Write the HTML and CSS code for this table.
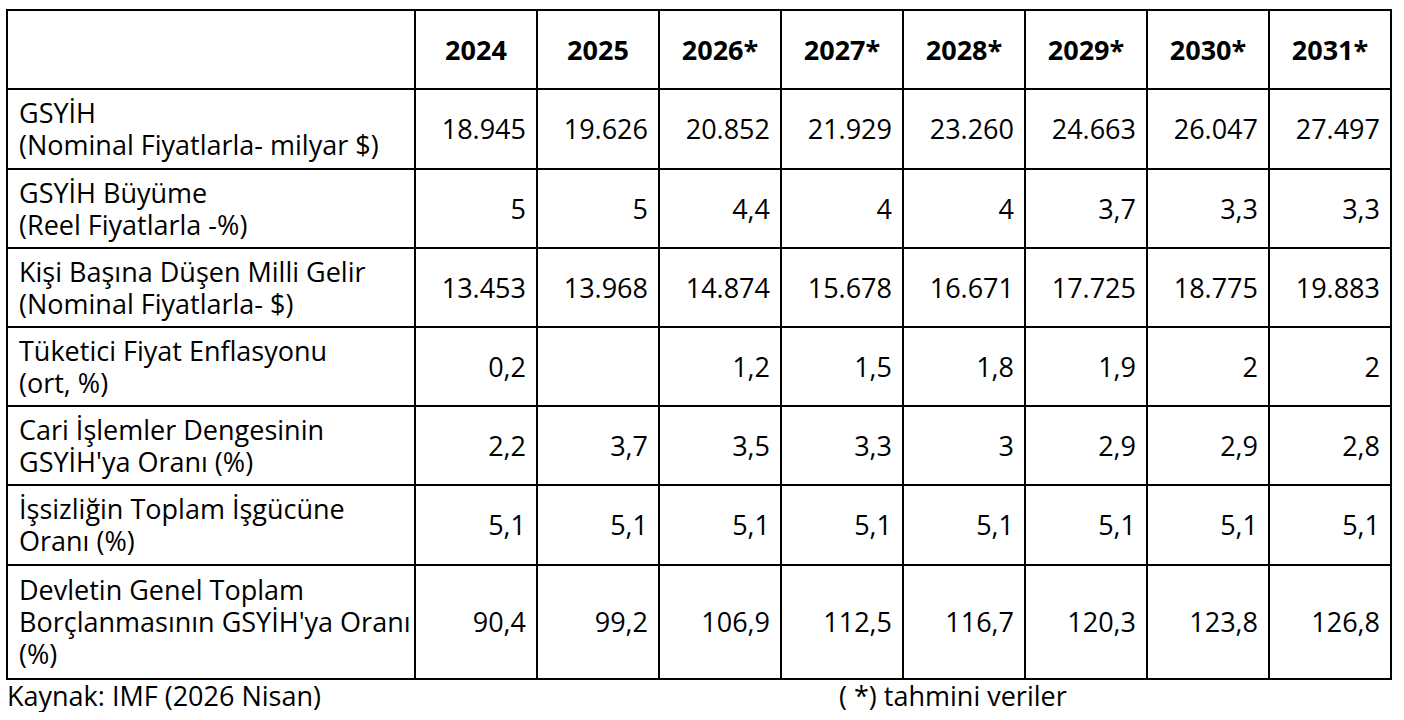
FILE: index.html
```html
<!DOCTYPE html>
<html lang="tr">
<head>
<meta charset="utf-8">
<title>Makroekonomik Göstergeler</title>
<link rel="stylesheet" href="styles.css">
</head>
<body>
<table class="data">
  <colgroup>
    <col class="c-label">
    <col class="c-num"><col class="c-num"><col class="c-num"><col class="c-num">
    <col class="c-num"><col class="c-num"><col class="c-num"><col class="c-num">
  </colgroup>
  <thead>
    <tr class="r79">
      <th class="lbl"></th>
      <th>2024</th><th>2025</th><th>2026*</th><th>2027*</th><th>2028*</th><th>2029*</th><th>2030*</th><th>2031*</th>
    </tr>
  </thead>
  <tbody>
    <tr class="r80">
      <td class="lbl">GSYİH<br>(Nominal Fiyatlarla- milyar $)</td>
      <td>18.945</td><td>19.626</td><td>20.852</td><td>21.929</td><td>23.260</td><td>24.663</td><td>26.047</td><td>27.497</td>
    </tr>
    <tr class="r79">
      <td class="lbl">GSYİH Büyüme<br>(Reel Fiyatlarla -%)</td>
      <td>5</td><td>5</td><td>4,4</td><td>4</td><td>4</td><td>3,7</td><td>3,3</td><td>3,3</td>
    </tr>
    <tr class="r79">
      <td class="lbl">Kişi Başına Düşen Milli Gelir<br>(Nominal Fiyatlarla- $)</td>
      <td>13.453</td><td>13.968</td><td>14.874</td><td>15.678</td><td>16.671</td><td>17.725</td><td>18.775</td><td>19.883</td>
    </tr>
    <tr class="r79">
      <td class="lbl">Tüketici Fiyat Enflasyonu<br>(ort, %)</td>
      <td>0,2</td><td></td><td>1,2</td><td>1,5</td><td>1,8</td><td>1,9</td><td>2</td><td>2</td>
    </tr>
    <tr class="r79">
      <td class="lbl">Cari İşlemler Dengesinin<br>GSYİH'ya Oranı (%)</td>
      <td>2,2</td><td>3,7</td><td>3,5</td><td>3,3</td><td>3</td><td>2,9</td><td>2,9</td><td>2,8</td>
    </tr>
    <tr class="r80">
      <td class="lbl">İşsizliğin Toplam İşgücüne<br>Oranı (%)</td>
      <td>5,1</td><td>5,1</td><td>5,1</td><td>5,1</td><td>5,1</td><td>5,1</td><td>5,1</td><td>5,1</td>
    </tr>
    <tr class="r114">
      <td class="lbl">Devletin Genel Toplam<br>Borçlanmasının GSYİH'ya Oranı<br>(%)</td>
      <td>90,4</td><td>99,2</td><td>106,9</td><td>112,5</td><td>116,7</td><td>120,3</td><td>123,8</td><td>126,8</td>
    </tr>
  </tbody>
</table>
<div class="footer">
  <span class="source">Kaynak: IMF (2026 Nisan)</span>
  <span class="note">( *) tahmini veriler</span>
</div>
</body>
</html>
```

FILE: styles.css
```css
html, body {
  margin: 0;
  padding: 0;
  background: #ffffff;
}

body {
  font-family: "Open Sans", "Liberation Sans", sans-serif;
  font-size: 27px;
  line-height: 32px;
  color: #000000;
}

.data {
  margin: 9px 0 0 6px;
  border-collapse: separate;
  border-spacing: 0;
  table-layout: fixed;
  width: 1386px;
  border-top: 2px solid #000;
  border-left: 2px solid #000;
}

.c-label { width: 408px; }
.c-num { width: 122px; }

.data th,
.data td {
  box-sizing: border-box;
  border-right: 2px solid #000;
  border-bottom: 2px solid #000;
  padding: 0 10px;
  vertical-align: middle;
  white-space: nowrap;
  text-align: right;
  font-weight: 400;
}

.data th {
  text-align: center;
  font-weight: 700;
}

.data .lbl {
  text-align: left;
  padding-left: 11px;
}

.r79 { height: 79px; }
.r80 { height: 80px; }
.r114 { height: 114px; }

.footer {
  display: flex;
  padding-left: 7px;
}

.source {
  width: 832px;
}
```
